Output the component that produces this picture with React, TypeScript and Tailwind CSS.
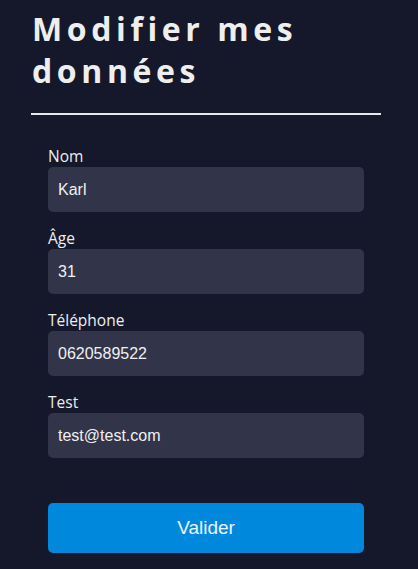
export default function App() {
  const fields = [
    { label: "Nom", value: "Karl" },
    { label: "Âge", value: "31" },
    { label: "Téléphone", value: "0620589522" },
    { label: "Test", value: "test@test.com" },
  ];

  return (
    <div className="min-h-[569px] w-full bg-[#15182b] pt-[8px]">
      <div className="ml-[31px] w-[350px]">
        {/* Title */}
        <h1 className="pl-[1px] font-['Open_Sans',sans-serif] text-[32px] font-bold leading-[42px] tracking-[4.6px] text-[#eeeeee]">
          Modifier mes données
        </h1>
        <div className="mt-[21px] h-[2px] w-full bg-[#e8e8e8]"></div>

        {/* Form */}
        <form className="mt-[32px] flex flex-col px-[17px]">
          {fields.map((f) => (
            <div key={f.label} className="mb-[17px] flex flex-col">
              <label className="h-[20px] font-['Open_Sans',sans-serif] text-[15.5px] leading-[18px] text-[#eeeeee]">
                {f.label}
              </label>
              <input
                defaultValue={f.value}
                className="h-[45px] w-full rounded-[5px] bg-[#32344a] px-[10px] font-['Liberation_Sans',Arial,sans-serif] text-[16px] text-[#f0f0f0] outline-none"
              />
            </div>
          ))}
          <button
            type="button"
            className="mt-[28px] h-[50px] w-full rounded-[5px] bg-[#0088dd] font-['Liberation_Sans',Arial,sans-serif] text-[19px] text-[#eef4ff]"
          >
            Valider
          </button>
        </form>
      </div>
    </div>
  );
}
